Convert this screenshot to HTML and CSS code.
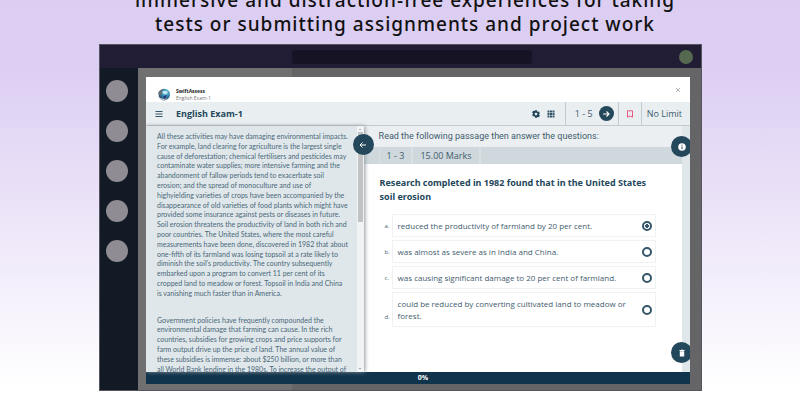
FILE: index.html
```html
<!DOCTYPE html>
<html lang="en">
<head>
<meta charset="utf-8">
<meta name="viewport" content="width=device-width, initial-scale=1">
<title>SwiftAssess - English Exam-1</title>
<link rel="stylesheet" href="styles.css">
</head>
<body>
<main class="slide">
  <h1 class="headline">immersive and distraction-free experiences for taking<br>tests or submitting assignments and project work</h1>
  <section class="window">
    <header class="titlebar">
      <span class="search"></span>
      <span class="avatar"></span>
    </header>
    <div class="workspace">
      <nav class="rail" aria-label="Apps">
        <span class="dot"></span><span class="dot"></span><span class="dot"></span><span class="dot"></span><span class="dot"></span>
      </nav>
      <div class="stage">
        <article class="modal">
          <header class="brand">
            <svg class="logo" viewBox="0 0 14 14" aria-hidden="true">
              <defs><radialGradient id="globe" cx=".6" cy=".35" r=".7"><stop offset="0" stop-color="#a5dcef"/><stop offset=".45" stop-color="#3595b8"/><stop offset="1" stop-color="#253c5c"/></radialGradient></defs>
              <circle cx="7.3" cy="6.5" r="5.7" fill="url(#globe)"/>
              <path d="M1 5Q3 1 7 1Q4 4 5 7Q3 8 1 5Z" fill="#68707b"/>
              <path d="M5 4Q8 2 11 4Q10 6 7 6Z" fill="#c5edf6"/>
              <path d="M.8 8Q4 12 10 10L8 13Q3 13 .8 8Z" fill="#c2c6ce"/>
              <path d="M6 8L10 7L8 12Z" fill="#243d78"/>
            </svg>
            <div class="brand-text"><strong>SwiftAssess</strong><span>English Exam-1</span></div>
            <button class="close" aria-label="Close"><svg viewBox="0 0 6 6"><path d="M1 1L5 5M5 1L1 5" stroke="#999" stroke-width=".8"/></svg></button>
          </header>
          <div class="toolbar">
            <button class="menu" aria-label="Menu"><svg viewBox="0 0 8 8"><path d="M0.5 1.5H7.5M.5 4H7.5M.5 6.5H7.5" stroke="#36566a" stroke-width="1.1"/></svg></button>
            <h2>English Exam-1</h2>
            <div class="tools">
              <button aria-label="Settings"><svg viewBox="0 0 24 24"><path fill="#23475b" fill-rule="evenodd" d="M9 1h6l.7 3.2 2 1.1 3-1 3 5.2-2.4 2.2v2.6l2.4 2.2-3 5.2-3-1-2 1.1L15 23H9l-.7-3.2-2-1.1-3 1-3-5.2 2.4-2.2V9.700L.3 7.500l3-5.200 3 1 2-1.100zM12 8a4 4 0 1 0 0 8 4 4 0 0 0 0-8z"/></svg></button>
              <button aria-label="All questions"><svg viewBox="0 0 8 8"><path fill="#36566a" d="M.5 .5h2v2h-2zM3 .5h2v2H3zM5.500 .5h2v2h-2zM.5 3h2v2h-2zM3 3h2v2H3zM5.500 3h2v2h-2zM.5 5.500h2v2h-2zM3 5.500h2v2H3zM5.500 5.500h2v2h-2z"/></svg></button>
            </div>
            <div class="pager"><span>1 - 5</span><button class="round" aria-label="Next"><svg viewBox="0 0 8 8"><path d="M1 4H7M4.500 1.500L7 4L4.500 6.500" fill="none" stroke="#fff" stroke-width="1.100"/></svg></button></div>
            <div class="mark"><button aria-label="Bookmark"><svg viewBox="0 0 8 8"><path d="M1.500 .8H6.500V7.200L4 6L1.500 7.200Z" fill="none" stroke="#e8577f" stroke-width="1"/></svg></button></div>
            <div class="limit">No Limit</div>
          </div>
          <div class="exam">
            <section class="passage">
              <div class="passage-text">
                <p>All these activities may have damaging environmental impacts.<br>For example, land clearing for agriculture is the largest single<br>cause of deforestation; chemical fertilisers and pesticides may<br>contaminate water supplies; more intensive farming and the<br>abandonment of fallow periods tend to exacerbate soil<br>erosion; and the spread of monoculture and use of<br>highyielding varieties of crops have been accompanied by the<br>disappearance of old varieties of food plants which might have<br>provided some insurance against pests or diseases in future.<br>Soil erosion threatens the productivity of land in both rich and<br>poor countries. The United States, where the most careful<br>measurements have been done, discovered in 1982 that about<br>one-fifth of its farmland was losing topsoil at a rate likely to<br>diminish the soil's productivity. The country subsequently<br>embarked upon a program to convert 11 per cent of its<br>cropped land to meadow or forest. Topsoil in India and China<br>is vanishing much faster than in America.</p>
                <p>Government policies have frequently compounded the<br>environmental damage that farming can cause. In the rich<br>countries, subsidies for growing crops and price supports for<br>farm output drive up the price of land. The annual value of<br>these subsidies is immense: about $250 billion, or more than<br>all World Bank lending in the 1980s. To increase the output of</p>
              </div>
              <div class="scrollbar"><span class="up"></span><span class="thumb"></span><span class="down"></span></div>
              <button class="fab back" aria-label="Back"><svg viewBox="0 0 8 8"><path d="M7 4H1M3.500 1.500L1 4L3.500 6.500" fill="none" stroke="#fff" stroke-width="1"/></svg></button>
            </section>
            <section class="question">
              <p class="intro">Read the following passage then answer the questions:</p>
              <div class="marks"><span>1 - 3</span><span>15.00 Marks</span></div>
              <fieldset class="answers">
                <legend>Research completed in 1982 found that in the United States<br>soil erosion</legend>
                <div class="answer"><span class="letter">a.</span><label for="a">reduced the productivity of farmland by 20 per cent.<input type="radio" name="q" id="a" checked></label></div>
                <div class="answer"><span class="letter">b.</span><label for="b">was almost as severe as in India and China.<input type="radio" name="q" id="b"></label></div>
                <div class="answer"><span class="letter">c.</span><label for="c">was causing significant damage to 20 per cent of farmland.<input type="radio" name="q" id="c"></label></div>
                <div class="answer tall"><span class="letter">d.</span><label for="d">could be reduced by converting cultivated land to meadow or<br>forest.<input type="radio" name="q" id="d"></label></div>
              </fieldset>
            </section>
            <aside class="side">
              <button class="fab info" aria-label="Information"><svg viewBox="0 0 8 8"><circle cx="4" cy="4" r="3.800" fill="#fff"/><path d="M4 1.700V2.700M4 3.500V6.200" stroke="#23475b" stroke-width="1"/></svg></button>
              <button class="fab trash" aria-label="Delete"><svg viewBox="0 0 8 8"><path d="M1.500 1H3L3.500 .5H4.500L5 1H6.500V2H1.500ZM1.800 2.300H6.200V7.500H1.800Z" fill="#fff"/></svg></button>
            </aside>
          </div>
          <footer class="progress">0%</footer>
        </article>
      </div>
    </div>
  </section>
</main>
</body>
</html>
```
FILE: styles.css
```css
* { box-sizing: border-box; }
body {
  margin: 0;
  font-family: "Open Sans", "Noto Sans", sans-serif;
  color: #3f5c6d;
}
h1, h2, p { margin: 0; }
button {
  display: grid;
  place-items: center;
  border: 0;
  padding: 0;
  background: none;
}
svg { display: block; width: 8px; height: 8px; }
.slide {
  min-height: 100vh;
  overflow: hidden;
  background: linear-gradient(#dccdf2 0, #ddcff3 18%, #fff 97%);
}
.headline {
  margin-top: -12px;
  font: 500 19px/24px "Noto Sans", sans-serif;
  letter-spacing: 1px;
  color: #111;
  text-align: center;
  padding-left: 10px;
}
.window {
  margin: 8px 98px 9px 99px;
  border: 1px solid #55545f;
  background: #707070;
}
.titlebar {
  display: grid;
  grid-template-columns: 1fr 240px 1fr;
  align-items: center;
  height: 23px;
  padding: 0 8px 0 30px;
  background: #201d34;
}
.search { grid-column: 2; height: 14px; border-radius: 3px; background: #161424; }
.avatar { justify-self: end; width: 14px; height: 14px; border-radius: 50%; background: #54694f; }
.workspace { display: flex; }
.rail {
  display: flex;
  flex-direction: column;
  align-items: center;
  gap: 18px;
  width: 38px;
  padding: 12px 4px 0 0;
  background: #121a25;
}
.dot { width: 22px; height: 22px; border-radius: 50%; background: #8f8c94; }
.stage {
  flex: 1;
  min-width: 0;
  padding: 9px 11px 6px 8px;
  background: linear-gradient(90deg, #707070 154px, #656567 154px);
}
.modal { overflow: hidden; background: #fff; }
.brand { display: flex; align-items: center; height: 25px; padding: 10px 9px 0 11px; }
.logo { width: 14px; height: 14px; }
.brand-text { display: grid; margin-left: 5px; font-size: 5px; line-height: 7px; color: #777; }
.brand-text strong { color: #222; }
.close { margin: -9px 0 0 auto; }
.close svg { width: 6px; height: 6px; }
.toolbar {
  display: flex;
  align-items: center;
  height: 24px;
  padding-left: 9px;
  border-bottom: 1px solid #c3cbd0;
  background: #e9eef1;
  font-size: 9px;
}
.toolbar h2 { margin-left: 13px; font-size: 9px; color: #23475b; }
.tools { display: flex; gap: 7px; margin-left: auto; padding-right: 10px; }
.pager, .mark, .limit { display: flex; align-items: center; height: 100%; border-left: 1px solid #c3cbd0; }
.pager { gap: 6px; padding: 0 4px 0 9px; }
.round { width: 15px; height: 15px; border-radius: 50%; background: #23475b; }
.mark { padding: 0 7px; }
.limit { padding: 0 8px 0 5px; }
.exam { display: flex; height: 246px; }
.passage {
  position: relative;
  z-index: 1;
  display: flex;
  flex: 0 0 40%;
  background: #dfe7eb;
  box-shadow: 1px 0 4px #8e979b;
}
.passage-text {
  flex: 1;
  min-width: 0;
  overflow: hidden;
  padding: 6px 0 0 11px;
  font-family: Lato, "Open Sans", sans-serif;
  font-size: 7px;
  line-height: 1.4;
  color: #4b6778;
  white-space: nowrap;
}
.passage-text p + p { margin-top: 17px; }
.scrollbar {
  display: flex;
  flex-direction: column;
  align-items: center;
  width: 7px;
  background: #f1f3f4;
}
.up, .down { border: 1px solid transparent; }
.up { margin: 2px 0; border-bottom-color: #777; }
.down { margin: auto 0 2px; border-top-color: #555; }
.thumb { width: 5px; height: 90px; background: #c1c3c5; }
.fab {
  position: absolute;
  width: 21px;
  height: 21px;
  border-radius: 50%;
  background: #23475b;
}
.back { top: 8px; right: -10px; }
.question { flex: 1; min-width: 0; }
.intro { padding: 0 15px; background: #eceff1; font-family: Roboto, sans-serif; font-size: 9px; line-height: 21px; }
.marks { display: flex; padding-left: 15px; background: #cfd8dc; font-size: 9px; line-height: 17px; }
.marks span { padding: 0 7px; border-right: 2px solid #dae1e4; }
.marks span:first-child { border-left: 1px solid #dae1e4; }
.answers { min-width: 0; margin: 0; border: 0; padding: 10px 26px 0 13px; font-size: 8px; }
.answers legend { padding: 12px 0 0 3px; font: 700 9px/14px "Noto Sans", sans-serif; color: #23475b; white-space: nowrap; }
.answer { display: flex; align-items: center; margin-bottom: 3px; }
.letter { width: 15px; padding-left: 8px; font-size: 6px; }
.answer label {
  display: flex;
  flex: 1;
  align-items: center;
  min-height: 23px;
  padding: 0 3px 0 5px;
  border: 1px solid #eff1f2;
  line-height: 12px;
  white-space: nowrap;
}
.tall label { min-height: 35px; }
.tall .letter { align-self: flex-end; padding-bottom: 6px; }
.answers input {
  appearance: none;
  width: 10px;
  height: 10px;
  margin: 0 0 0 auto;
  border: 2px solid #36566a;
  border-radius: 50%;
}
.answers input:checked { background: radial-gradient(#36566a 2px, #fff 2px); }
.side { position: relative; flex: 0 0 8px; background: #dfe7eb; }
.info { top: 10px; right: -2px; }
.trash { bottom: 9px; right: -2px; }
.progress { background: #10344c; color: #fff; font-size: 7px; font-weight: 700; line-height: 12px; text-align: center; padding-left: 10px; }
```
